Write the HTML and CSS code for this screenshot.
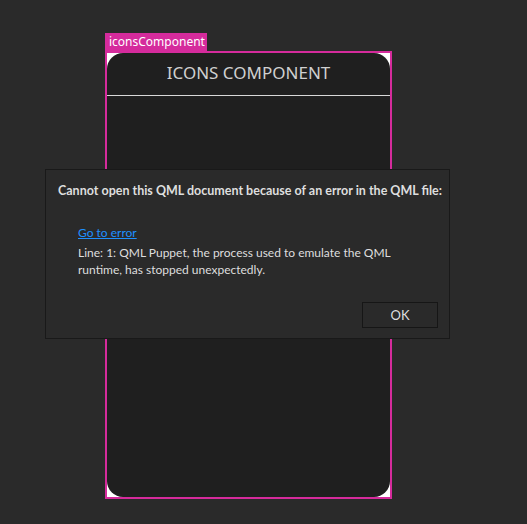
FILE: index.html
```html
<!DOCTYPE html>
<html>
<head>
<meta charset="utf-8">
<link rel="stylesheet" href="styles.css">
</head>
<body>
<div class="canvas">
  <div class="item">
    <div class="item-label">iconsComponent</div>
    <div class="item-frame">
      <div class="phone">
        <div class="phone-header">ICONS COMPONENT</div>
      </div>
    </div>
  </div>
  <div class="dialog">
    <div class="dialog-title">Cannot open this QML document because of an error in the QML file:</div>
    <div class="dialog-body">
      <a class="dialog-link" href="#">Go to error</a>
      <p class="dialog-msg">Line: 1: QML Puppet, the process used to emulate the QML runtime, has stopped unexpectedly.</p>
    </div>
    <div class="dialog-actions">
      <button class="btn">OK</button>
    </div>
  </div>
</div>
</body>
</html>
```
FILE: styles.css
```css
html, body {
  margin: 0;
  padding: 0;
  background: #2a2a2a;
}
.canvas {
  position: relative;
  width: 527px;
  height: 524px;
  overflow: hidden;
  font-family: "Lato", "Noto Sans", sans-serif;
}
.item {
  position: absolute;
  left: 105px;
  top: 33px;
}
.item-label {
  display: block;
  background: #d52b9c;
  color: #ffffff;
  font-family: "Noto Sans", sans-serif;
  font-size: 12px;
  line-height: 18px;
  height: 18px;
  padding: 0 5px 0 4px;
  width: 93px;
}
.item-frame {
  width: 283px;
  height: 444px;
  border: 2px solid #d52b9c;
  background: #ffffff;
}
.phone {
  width: 100%;
  height: 100%;
  background: #1f1f1f;
  border-radius: 16px;
}
.phone-header {
  height: 42px;
  border-bottom: 1px solid #d8d8d8;
  color: #d0d0d0;
  font-family: "Noto Sans", sans-serif;
  font-size: 17px;
  text-align: center;
  line-height: 40px;
}
.dialog {
  position: absolute;
  left: 45px;
  top: 169px;
  width: 403px;
  height: 168px;
  background: #2a2a2a;
  border: 1px solid #191919;
  display: flex;
  flex-direction: column;
  color: #dedede;
  font-size: 12px;
}
.dialog-title {
  font-weight: bold;
  font-size: 12.5px;
  padding: 12px 0 0 12px;
  line-height: 17px;
  white-space: nowrap;
}
.dialog-body {
  padding: 25px 0 0 32px;
}
.dialog-link {
  display: block;
  color: #1e90ff;
  text-decoration: underline;
  line-height: 17px;
}
.dialog-msg {
  margin: 3px 0 0 0;
  width: 330px;
  line-height: 17px;
}
.dialog-actions {
  margin-top: auto;
  display: flex;
  justify-content: flex-end;
  padding: 0 11px 10px 0;
}
.btn {
  width: 76px;
  height: 26px;
  background: #2a2a2a;
  border: 1px solid #161616;
  color: #dedede;
  font-family: inherit;
  font-size: 13px;
  padding: 0;
}
```
